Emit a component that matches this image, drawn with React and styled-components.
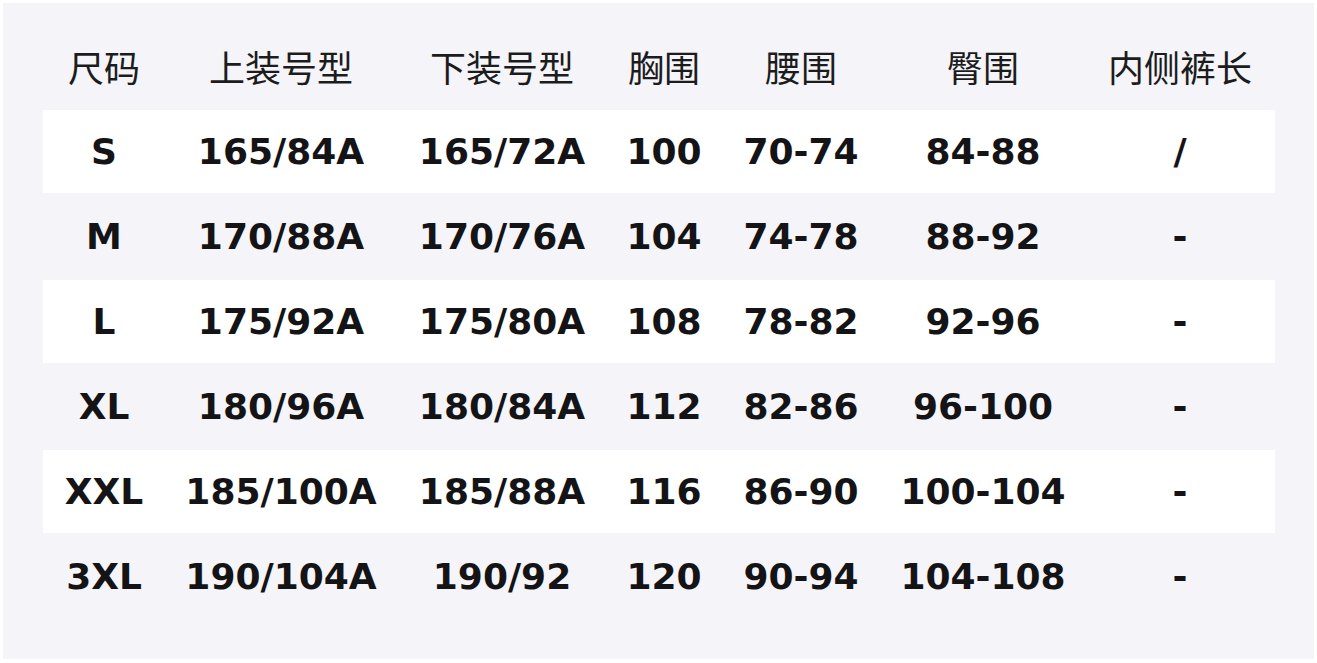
import React from "react";
import styled, { createGlobalStyle } from "styled-components";

const GlobalStyle = createGlobalStyle`
  html, body {
    margin: 0;
    padding: 0;
    background: #ffffff;
  }
`;

const columns = ["尺码", "上装号型", "下装号型", "胸围", "腰围", "臀围", "内侧裤长"];

const rows = [
  ["S", "165/84A", "165/72A", "100", "70-74", "84-88", "/"],
  ["M", "170/88A", "170/76A", "104", "74-78", "88-92", "-"],
  ["L", "175/92A", "175/80A", "108", "78-82", "92-96", "-"],
  ["XL", "180/96A", "180/84A", "112", "82-86", "96-100", "-"],
  ["XXL", "185/100A", "185/88A", "116", "86-90", "100-104", "-"],
  ["3XL", "190/104A", "190/92", "120", "90-94", "104-108", "-"],
];

const App = () => {
  return (
    <Page>
      <GlobalStyle />
      <Panel>
        <Table>
          <HeadRow>
            {columns.map((c) => (
              <HeadCell key={c}>{c}</HeadCell>
            ))}
          </HeadRow>
          {rows.map((r, i) => (
            <Row key={r[0]} striped={i % 2 === 0}>
              {r.map((v, j) => (
                <Cell key={j}>{v}</Cell>
              ))}
            </Row>
          ))}
        </Table>
      </Panel>
    </Page>
  );
};

export default App;

const Page = styled.div`
  padding: 3px;
  width: 1311px;
`;

const Panel = styled.div`
  background-color: #f4f4f9;
  padding: 24px 39px 41px 40px;
`;

const Table = styled.div`
  display: flex;
  flex-direction: column;
  gap: 2px;
`;

const HeadRow = styled.div`
  display: grid;
  grid-template-columns: 122px 232px 210px 114px 160px 204px 190px;
  height: 81px;
  align-items: center;
`;

const Row = styled(HeadRow).withConfig({
  shouldForwardProp: (p) => p !== "striped",
})`
  height: 83px;
  background-color: ${(p) => (p.striped ? "#ffffff" : "transparent")};
`;

const HeadCell = styled.div`
  text-align: center;
  font-family: "Noto Sans CJK SC", "Noto Sans", sans-serif;
  font-size: 36px;
  line-height: 1;
  color: #1c1c1c;
  padding-bottom: 4px;
`;

const Cell = styled.div`
  text-align: center;
  font-family: "DejaVu Sans", sans-serif;
  font-weight: bold;
  font-size: 36px;
  line-height: 1;
  color: #141416;
  padding-top: 1px;
`;
